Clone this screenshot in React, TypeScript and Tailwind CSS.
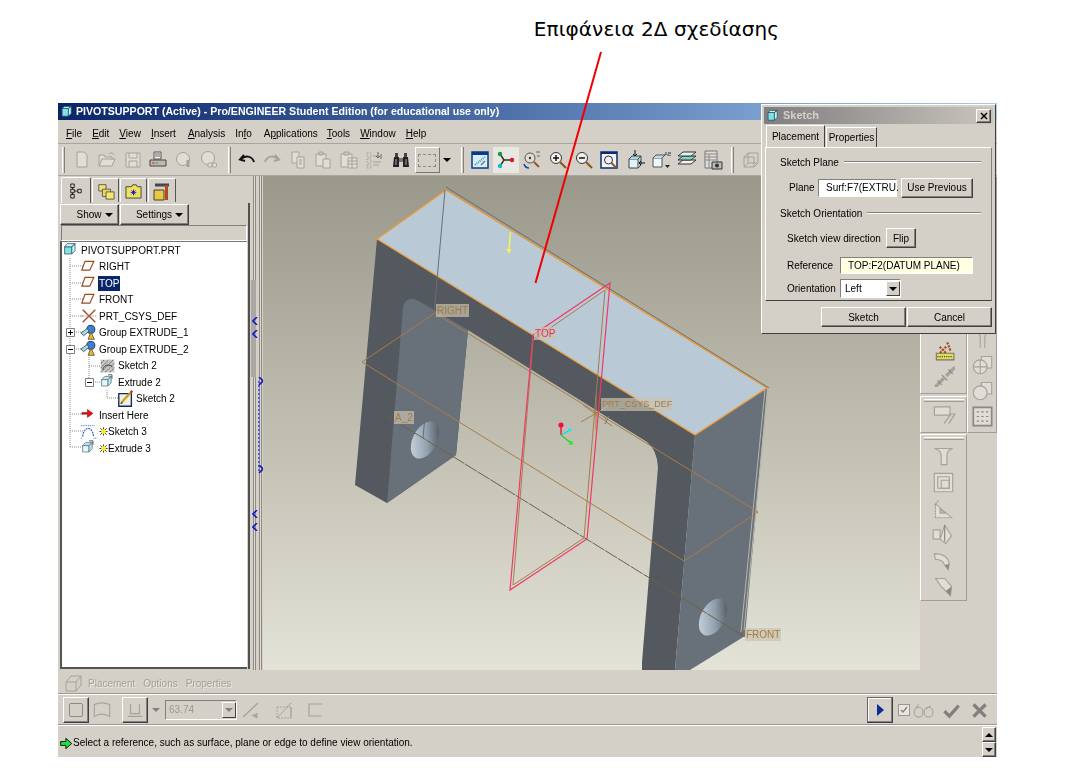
import React from 'react';

const Ico: React.FC<{ children: React.ReactNode; size?: number }> = ({ children, size = 20 }) => (
  <svg width={size} height={size} viewBox="0 0 20 20" className="shrink-0">
    {children}
  </svg>
);

const GREY = '#a5a29a';
const PALE = '#e0ddd6';

// toolbar icons
const NewIco = () => <Ico><path d="M5 2h7l3 3v12H5z" fill={PALE} stroke={GREY} /></Ico>;
const OpenIco = () => <Ico><path d="M2 16V5h5l1 2h7v3M2 16l3-7h13l-3 7z" fill={PALE} stroke={GREY} /><path d="M12 4c2-2 4-1 5 1" fill="none" stroke={GREY} /></Ico>;
const SaveIco = () => <Ico><path d="M3 3h14v14H3z" fill={PALE} stroke={GREY} /><path d="M6 3v5h8V3M6 17v-6h8v6" fill="none" stroke={GREY} /></Ico>;
const PrintIco = () => <Ico><path d="M6 2h7v7H6z" fill="#f2f0ea" stroke="#555" /><path d="M2 10h16v6H2z" fill="#bdb9b0" stroke="#444" /><path d="M4 13h3" stroke="#d33" /><path d="M8 13h2" stroke="#2a2" /><path d="M7 4h5M7 6h5" stroke="#666" /></Ico>;
const DiscIco = () => <Ico><circle cx="9" cy="9" r="6.5" fill={PALE} stroke={GREY} /><path d="M14 10v7" stroke={GREY} strokeWidth="3" /></Ico>;
const DiscLinkIco = () => <Ico><circle cx="9" cy="8" r="6.5" fill={PALE} stroke={GREY} /><circle cx="11" cy="15" r="2.2" fill={PALE} stroke={GREY} /><circle cx="15.5" cy="15" r="2.2" fill={PALE} stroke={GREY} /></Ico>;
const UndoIco = () => <Ico><path d="M7 5L3 9.5l5 1.5M3.5 9.5C8 5 15 5.5 17 12" fill="none" stroke="#111" strokeWidth="2" /></Ico>;
const RedoIco = () => <Ico><path d="M13 5l4 4.5-5 1.5M16.500 9.500C12 5 5 5.500 3 12" fill="none" stroke={GREY} strokeWidth="2" /></Ico>;
const CopyIco = () => <Ico><path d="M4 2h7v11H4z" fill={PALE} stroke={GREY} /><path d="M9 7h7v11H9z" fill={PALE} stroke={GREY} /><path d="M11 10h3M11 12h3M11 14h3" stroke={GREY} /></Ico>;
const PasteIco = () => <Ico><path d="M3 4h10v12H3z" fill={PALE} stroke={GREY} /><path d="M6 2h4v3H6z" fill="#c9c6be" stroke={GREY} /><path d="M10 9h7v9h-7z" fill={PALE} stroke={GREY} /></Ico>;
const PasteTblIco = () => <Ico><path d="M2 4h11v13H2z" fill={PALE} stroke={GREY} /><path d="M5 2h5v3H5z" fill="#c9c6be" stroke={GREY} /><path d="M9 8h9v10H9zM9 11h9M9 14h9M13 8v10" fill={PALE} stroke={GREY} /></Ico>;
const RegenIco = () => <Ico><path d="M3 3h4v4H3zM3 9h4v4H3zM3 15h4v3H3z" fill="none" stroke={GREY} strokeDasharray="1.500 1" /><path d="M9 6h5M9 12h8M9 15h6" stroke={GREY} /><path d="M14 2v6m-2-2l2 2 2-2M17 9V4" fill="none" stroke="#666" /></Ico>;
const BinocularsIco = () => <Ico><path d="M3 7h5v10H2zM12 7h5l1 10h-6z" fill="#222" /><path d="M4 3h3v4H4zM13 3h3v4h-3z" fill="#444" /><path d="M8 8h4v4H8z" fill="#777" /><path d="M5 9v6M15 9v6" stroke="#aaa" /></Ico>;
const ViewIco = () => <Ico><path d="M2 2h16v16H2z" fill="#d6eef9" stroke="#0a3a8a" strokeWidth="1.500" /><path d="M2 2h16v3H2z" fill="#0a3a8a" /><path d="M5 15L15 7" stroke="#49a" strokeDasharray="1 1" strokeWidth="2" /><path d="M11 15l4-4" stroke="#777" strokeWidth="1.500" /></Ico>;
const TriadIco = () => <Ico><path d="M8 10l-4-6M8 10l-4 6M8 10h8" stroke="#333" strokeWidth="1.500" /><circle cx="4" cy="4" r="2.200" fill="#1a9a3a" /><circle cx="4" cy="16" r="2.200" fill="#19b9c9" /><circle cx="16" cy="10" r="2.300" fill="#d0202a" /></Ico>;
const SpinIco = () => <Ico><circle cx="8" cy="8" r="5" fill={PALE} stroke="#555" /><circle cx="8" cy="8" r="1.200" fill="#333" /><path d="M12 12l5 5" stroke="#953" strokeWidth="2" /><path d="M2 14c1 3 3 4 5 4" fill="none" stroke="#14a" strokeWidth="1.500" /><path d="M14 2h4M15 6h3" stroke="#666" /></Ico>;
const ZoomInIco = () => <Ico><circle cx="8" cy="8" r="5.500" fill="#f2f2ee" stroke="#333" /><path d="M5 8h6M8 5v6" stroke="#111" strokeWidth="1.500" /><path d="M12 12l6 6" stroke="#8a5a20" strokeWidth="2.200" /></Ico>;
const ZoomOutIco = () => <Ico><circle cx="8" cy="8" r="5.500" fill="#f2f2ee" stroke="#333" /><path d="M5 8h6" stroke="#111" strokeWidth="1.500" /><path d="M12 12l6 6" stroke="#8a5a20" strokeWidth="2.200" /></Ico>;
const RefitIco = () => <Ico><path d="M2 2h16v16H2z" fill="#f2f2ee" stroke="#0a2a7a" strokeWidth="1.500" /><path d="M2 2h16v2H2z" fill="#0a2a7a" /><circle cx="9.500" cy="10" r="4" fill="#eef" stroke="#333" /><path d="M12.500 13l5 5" stroke="#8a5a20" strokeWidth="2" /></Ico>;
const CubeArrowIco = () => <Ico><path d="M4 9h9v9H4z" fill="#dff3f8" stroke="#444" /><path d="M4 9l3-3h9l-3 3M13 18l3-3V6" fill="#9fdbe8" stroke="#444" /><path d="M10 0v6m-2-2l2 2 2-2" fill="none" stroke="#111" /><path d="M20 13h-6m2-2l-2 2 2 2" fill="none" stroke="#111" /></Ico>;
const CubeAbIco = () => <Ico><path d="M2 8h9v9H2z" fill="#eef8fa" stroke="#555" /><path d="M2 8l3-3h9l-3 3" fill="#bde" stroke="#555" /><text x="13" y="6" fontSize="6" fill="#333" fontFamily="Liberation Sans">AB</text><path d="M14 15h5l-2.500 3z" fill="#222" /></Ico>;
const LayersIco = () => <Ico><path d="M1 14l5-4h13l-5 4z" fill="#f4f4f0" stroke="#333" /><path d="M1 10l5-4h13l-5 4z" fill="#7ed6c8" stroke="#333" /><path d="M1 6l5-4h13l-5 4z" fill="#dff3ee" stroke="#333" /></Ico>;
const SheetCamIco = () => <Ico><path d="M2 1h12v17H2z" fill={PALE} stroke="#777" /><path d="M2 4h12M2 7h12M2 10h12M6 4v14" stroke="#888" /><path d="M9 12h10v7H9z" fill="#bbb" stroke="#333" /><circle cx="14" cy="15.500" r="2" fill="#333" /></Ico>;
const WireCubeIco = () => <Ico><path d="M3 7h10v10H3zM3 7l4-4h10v10l-4 4M7 3v10h10M7 13l-4 4" fill="none" stroke={GREY} /></Ico>;

const ToolBtn: React.FC<{ children: React.ReactNode }> = ({ children }) => (
  <div className="flex h-[26px] w-[25.5px] items-center justify-center">{children}</div>
);
const ToolBtnWide: React.FC<{ children: React.ReactNode }> = ({ children }) => (
  <div className="flex h-[26px] w-[25.8px] items-center justify-center">{children}</div>
);
const Grip = () => <div className="mx-[1px] h-[26px] w-[3px] border-l border-r border-l-white border-r-[#808080] bg-[#d4d0c8]" />;

const Menu = () => {
  const items: [string, string, string, string][] = [
    ['', 'F', 'ile', ''], ['', 'E', 'dit', ''], ['', 'V', 'iew', ''], ['', 'I', 'nsert', ''], ['', 'A', 'nalysis', 'ml-[2px]'],
    ['In', 'f', 'o', ''], ['A', 'p', 'plications', 'ml-[2px]'], ['', 'T', 'ools', 'ml-[-1px]'], ['', 'W', 'indow', ''], ['', 'H', 'elp', ''],
  ];
  return (
    <div className="flex h-[24px] items-center gap-[10px] border-b border-[#a8a59d] pl-[8px] pt-[3px] text-[10px] text-black">
      {items.map(([a, b, c, extra]) => (
        <span key={a + b + c} className={extra}>{a}<u>{b}</u>{c}</span>
      ))}
    </div>
  );
};

const Toolbar = () => (
  <div className="flex h-[32px] items-center border-b border-[#a8a59d] pl-[3px] pt-[1px]">
    <Grip />
    <div className="w-[3px]" />
    <ToolBtn><NewIco /></ToolBtn><ToolBtn><OpenIco /></ToolBtn><ToolBtn><SaveIco /></ToolBtn>
    <ToolBtn><PrintIco /></ToolBtn><ToolBtn><DiscIco /></ToolBtn><ToolBtn><DiscLinkIco /></ToolBtn>
    <div className="w-[5px]" />
    <Grip />
    <div className="w-[2px]" />
    <ToolBtn><UndoIco /></ToolBtn><ToolBtn><RedoIco /></ToolBtn><ToolBtn><CopyIco /></ToolBtn>
    <ToolBtn><PasteIco /></ToolBtn><ToolBtn><PasteTblIco /></ToolBtn><ToolBtn><RegenIco /></ToolBtn>
    <div className="ml-[1px]"><ToolBtn><BinocularsIco /></ToolBtn></div>
    <div className="ml-[1px] flex h-[26px] w-[25px] items-center justify-center border border-b-[#777] border-l-white border-r-[#777] border-t-white">
      <div className="h-[13px] w-[18px] border border-dashed border-[#8d8a82]" />
    </div>
    <div className="ml-[3px] h-0 w-0 border-x-[4px] border-t-[4px] border-x-transparent border-t-black" />
    <div className="w-[9px]" />
    <Grip />
    <div className="w-[3px]" />
    <ToolBtnWide><ViewIco /></ToolBtnWide>
    <div className="flex h-[26px] w-[25.8px] items-center justify-center bg-[#e9e7e1]"><TriadIco /></div>
    <ToolBtnWide><SpinIco /></ToolBtnWide><ToolBtnWide><ZoomInIco /></ToolBtnWide><ToolBtnWide><ZoomOutIco /></ToolBtnWide>
    <ToolBtnWide><RefitIco /></ToolBtnWide><ToolBtnWide><CubeArrowIco /></ToolBtnWide><ToolBtnWide><CubeAbIco /></ToolBtnWide>
    <ToolBtnWide><LayersIco /></ToolBtnWide><ToolBtnWide><SheetCamIco /></ToolBtnWide>
    <div className="w-[5px]" />
    <Grip />
    <div className="w-[3px]" />
    <ToolBtn><WireCubeIco /></ToolBtn>
  </div>
);

// model tree icons
const TreeCube = () => <Ico size={16}><path d="M2 6h9v9H2z" fill="#7fe3e6" stroke="#456" /><path d="M2 6l3-4h10l-4 4zM11 6l4-4v9l-4 4z" fill="#bff" stroke="#456" /></Ico>;
const DatumIco = () => <Ico size={16}><path d="M5 3h11l-5 11H1z" fill="none" stroke="#9a4a20" strokeWidth="1.500" /></Ico>;
const CsysIco = () => <Ico size={18}><path d="M3 3l14 14M17 3L3 17" stroke="#a0502a" strokeWidth="1.500" /><path d="M1 10h18" stroke="#777" strokeDasharray="1 1" /><path d="M10 10l-5-6" stroke="#c66" /></Ico>;
const GroupIco = () => <Ico size={18}><circle cx="12" cy="6" r="4.500" fill="#3d7fd0" stroke="#235" /><path d="M9 17l3-8 4 8z" fill="#e6c21e" stroke="#654" /><path d="M1 10l7-5 2 3-6 5z" fill="#a8dbe0" stroke="#456" /></Ico>;
const HatchIco = () => <Ico size={18}><path d="M2 3h15v14H2z" fill="#c4c4c0" /><path d="M2 7l4-4M2 12l9-9M2 17L16 3M7 17l10-10M12 17l5-5" stroke="#555" strokeDasharray="2 1" /><path d="M4 14c2-6 8-6 11-3" fill="none" stroke="#333" /></Ico>;
const ExtrudeIco = () => <Ico size={16}><path d="M2 7h8v8H2z" fill="#e6f6f8" stroke="#678" /><path d="M2 7l4-4h8l-4 4zM10 7l4-4v8l-4 4z" fill="#b8e8ee" stroke="#678" /><path d="M10 1h5v5" fill="none" stroke="#345" /></Ico>;
const SketchPadIco = () => <Ico size={18}><path d="M2 4h14v14H2z" fill="#f4efdc" stroke="#0a2a6a" strokeWidth="1.500" /><path d="M5 14L15 3" stroke="#c8a020" strokeWidth="2.500" /><path d="M15 3l2-2" stroke="#d02020" strokeWidth="2.500" /><path d="M4 15l2-1" stroke="#222" strokeWidth="1.500" /></Ico>;
const InsertIco = () => <Ico size={16}><path d="M1 7h7V3l7 5-7 5V9H1z" fill="#e81010" stroke="#600" strokeWidth="0.600" /></Ico>;
const BlueSketchIco = () => <Ico size={18}><path d="M3 15c1-12 11-12 12 0" fill="none" stroke="#1a5ad0" strokeWidth="1.300" strokeDasharray="2 1" /><path d="M1 3h16M1 17h2M15 17h3" stroke="#1a5ad0" strokeDasharray="1 1" /></Ico>;
const Star = () => <Ico size={9}><path d="M10 1v18M1 10h18M3 3l14 14M17 3L3 17" stroke="#222" strokeWidth="2" /><circle cx="10" cy="10" r="5.500" fill="#f4ee20" /></Ico>;

type RowProps = { pad: string; icon: React.ReactNode; label: string; selected?: boolean; star?: boolean };

const TreeRow: React.FC<RowProps> = ({ pad, icon, label, selected, star }) => (
  <div className={`flex h-[16.5px] items-center ${pad}`}>
    <div className="flex w-[18px] shrink-0 items-center justify-center">{icon}</div>
    {star && <div className="ml-[2px] mr-[1px] flex w-[6px] items-center justify-center"><Star /></div>}
    <span className={selected ? 'bg-[#0a246a] px-[1px] text-white' : 'px-[1px] text-black'}>{label}</span>
  </div>
);

const Chevron: React.FC<{ right?: boolean; className: string }> = ({ right, className }) => (
  <svg width="6" height="8" viewBox="0 0 6 8" className={`absolute ${className}`}>
    <path d={right ? 'M1 0l4 4-4 4' : 'M5 0L1 4l4 4'} fill="none" stroke="#1414c8" strokeWidth="1.600" />
  </svg>
);

const PanelTab: React.FC<{ children: React.ReactNode; active?: boolean; width: string }> = ({ children, active, width }) => (
  <div className={`flex items-center justify-center rounded-t-[2px] border border-b-0 border-l-white border-r-[#555] border-t-white ${width} ${active ? 'h-[26px]' : 'mt-[1px] h-[24px]'}`}>{children}</div>
);

const Raised: React.FC<{ children: React.ReactNode; className: string }> = ({ children, className }) => (
  <div className={`flex items-center justify-center border border-b-[#404040] border-l-white border-r-[#404040] border-t-white text-black shadow-[inset_-1px_-1px_0_#808080] ${className}`}>{children}</div>
);

const Caret = () => <span className="ml-[3px] inline-block h-0 w-0 border-x-[4px] border-t-[4px] border-x-transparent border-t-black" />;

const LeftPanel = () => (
  <div className="flex w-[192px] shrink-0 flex-col pl-[2px] pt-[1px] text-[10px]">
    <div className="flex gap-[1px] pl-[1px]">
      <PanelTab active width="w-[30px]">
        <svg width="14" height="18" viewBox="0 0 16 20"><path d="M2 2h4v4H2zM2 8h4v4H2zM2 14h4v4H2zM10 8h4v4h-4z" fill="none" stroke="#111" /><path d="M4 6v2M4 12v2M6 10h4" stroke="#111" /></svg>
      </PanelTab>
      <PanelTab width="w-[27px]">
        <svg width="18" height="18" viewBox="0 0 20 20"><path d="M2 3h8v7H2z" fill="#f2e27a" stroke="#554" /><path d="M6 8h9v8H6z" fill="#f0d860" stroke="#554" /><path d="M10 11h9v8h-9z" fill="#f6e470" stroke="#554" /></svg>
      </PanelTab>
      <PanelTab width="w-[27px]">
        <svg width="17" height="17" viewBox="0 0 18 18"><path d="M1 5h6l1-2h4l1 2h4v12H1z" fill="#eee25e" stroke="#443" /><path d="M9 8v6M6 11h6M7 9l4 4M11 9l-4 4" stroke="#1a1ac0" /></svg>
      </PanelTab>
      <PanelTab width="w-[28px]">
        <svg width="20" height="20" viewBox="0 0 20 20"><path d="M2 9h10v10H2z" fill="#e8c840" stroke="#443" /><path d="M3 4h14" stroke="#445" strokeWidth="3" /><path d="M13 4h3v15h-3z" fill="#b44a18" /></svg>
      </PanelTab>
    </div>
    <div className="flex flex-col border-r-[2px] border-r-[#505050] pr-[1px] pt-[1px]">
      <div className="flex">
        <Raised className="h-[21px] w-[59px] pl-[10px]">Show<Caret /></Raised>
        <Raised className="ml-[1px] h-[21px] w-[69px] pl-[10px]">Settings<Caret /></Raised>
      </div>
      <div className="ml-[1px] h-[16px] border border-[#808080] border-b-white border-r-white bg-[#d4d0c8]" />
      <div className="relative h-[428px] border-l-[2px] border-t border-b-[2px] border-[#555] border-t-[#777] bg-white pt-0 text-[10px]">
        {/* dotted tree connectors */}
        <svg className="absolute left-0 top-0" width="186" height="230" fill="none" stroke="#8a8a8a" strokeDasharray="1 1">
          <path d="M8 16V205M8 24h14M8 41h14M8 57h14M8 74h14M8 90h14M8 107h14M8 172h14M8 189h14M8 205h14" />
          <path d="M27 115V140M27 124h16M27 140h12M45 148V156M45 156h14" />
        </svg>
        <svg className="absolute left-[4px] top-[86px]" width="9" height="9" viewBox="0 0 9 9"><path d="M.5.500h8v8h-8z" fill="#fff" stroke="#808080" /><path d="M2 4.500h5M4.500 2v5" stroke="#000" /></svg>
        <svg className="absolute left-[4px] top-[103px]" width="9" height="9" viewBox="0 0 9 9"><path d="M.5.500h8v8h-8z" fill="#fff" stroke="#808080" /><path d="M2 4.500h5" stroke="#000" /></svg>
        <svg className="absolute left-[23px] top-[136px]" width="9" height="9" viewBox="0 0 9 9"><path d="M.5.500h8v8h-8z" fill="#fff" stroke="#808080" /><path d="M2 4.500h5" stroke="#000" /></svg>
        <div className="relative">
          <TreeRow pad="pl-0" icon={<TreeCube />} label="PIVOTSUPPORT.PRT" />
          <TreeRow pad="pl-[18px]" icon={<DatumIco />} label="RIGHT" />
          <TreeRow pad="pl-[18px]" icon={<DatumIco />} label="TOP" selected />
          <TreeRow pad="pl-[18px]" icon={<DatumIco />} label="FRONT" />
          <TreeRow pad="pl-[18px]" icon={<CsysIco />} label="PRT_CSYS_DEF" />
          <TreeRow pad="pl-[18px]" icon={<GroupIco />} label="Group EXTRUDE_1" />
          <TreeRow pad="pl-[18px]" icon={<GroupIco />} label="Group EXTRUDE_2" />
          <TreeRow pad="pl-[37px]" icon={<HatchIco />} label="Sketch 2" />
          <TreeRow pad="pl-[37px]" icon={<ExtrudeIco />} label="Extrude 2" />
          <TreeRow pad="pl-[55px]" icon={<SketchPadIco />} label="Sketch 2" />
          <TreeRow pad="pl-[18px]" icon={<InsertIco />} label="Insert Here" />
          <TreeRow pad="pl-[18px]" icon={<BlueSketchIco />} label="Sketch 3" star />
          <TreeRow pad="pl-[18px]" icon={<ExtrudeIco />} label="Extrude 3" star />
        </div>
      </div>
    </div>
  </div>
);

const Splitter = () => (
  <div className="relative flex w-[13px] shrink-0 justify-center gap-[3px] pl-[1px]">
    <div className="w-[3px] border-x border-x-[#8d8a82] bg-[#dedbd3]" />
    <div className="w-[3px] border-x border-x-[#8d8a82] bg-[#dedbd3]" />
    <div className="absolute left-[1px] top-[104px] h-[97px] w-[5px] bg-[#aaa8a0]" />
    <div className="absolute left-[8px] top-[205px] h-[90px] w-[2px] border-l-2 border-dotted border-[#5a5ad0]" />
    <Chevron className="left-[2px] top-[141px]" />
    <Chevron className="left-[2px] top-[154px]" />
    <Chevron right className="left-[8px] top-[201px]" />
    <Chevron right className="left-[8px] top-[289px]" />
    <Chevron className="left-[2px] top-[334px]" />
    <Chevron className="left-[2px] top-[347px]" />
  </div>
);

const ModelLabel: React.FC<{ text: string; className: string; red?: boolean }> = ({ text, className, red }) => (
  <span className={`absolute bg-[#c9c3b0]/70 px-[1px] leading-[13px] ${red ? 'text-[#e8305f]' : 'text-[#a87a40]'} ${className}`}>{text}</span>
);

const Viewport = () => (
  <div className="relative w-[657px] shrink-0 overflow-hidden bg-gradient-to-b from-[#9a988a] to-[#e4e3d7]">
    <svg className="absolute left-0 top-0" width="657" height="494" viewBox="263 176 657 494" fill="none">
      <defs>
        <linearGradient id="hole" x1="1" y1="0" x2="0" y2="1">
          <stop offset="0" stopColor="#3d4249" />
          <stop offset="0.45" stopColor="#8fa0ae" />
          <stop offset="1" stopColor="#d4e0ea" />
        </linearGradient>
      </defs>
      {/* body */}
      <path d="M377 239L695 435L675 670H642V662L658 467Q657 450 647 442L468 330L456 455L387 503L355 485Z" fill="#54585f" />
      <path d="M387 503L403 308Q405 296 417 300L468 330L456 455Z" fill="#687179" />
      <path d="M695 435L767 388L745 636L690 670H675Z" fill="#687179" />
      <path d="M446 190L767 388L695 435L377 239Z" fill="#b9c9d6" />
      <path d="M377 239L695 435L767 388L446 190Z" stroke="#f0982a" strokeWidth="1.200" />
      <path d="M446 187L769 388" stroke="#6c6e70" />
      <ellipse cx="425" cy="440" rx="12" ry="20" transform="rotate(28 425 440)" fill="url(#hole)" />
      <ellipse cx="713" cy="617" rx="12" ry="20" transform="rotate(28 713 617)" fill="url(#hole)" />
      {/* back edges and axis */}
      <path d="M445 190L423 438" stroke="#6c6e70" />
      <path d="M388 417L423 438L745 637" stroke="#6f5f4a" strokeDasharray="14 1" />
      <path d="M768 388L744 630M765 390L741 632" stroke="#b8b5ac" />
      {/* TOP datum */}
      <path d="M362 362L435 313L758 512L684 561Z" stroke="#a87c48" />
      {/* FRONT datum */}
      <path d="M533 340L605 290L584 538L513 585Z" stroke="#a87c48" />
      <path d="M533 335L610 283L587 539L510 590Z" stroke="#f0386a" strokeWidth="1.200" />
      {/* csys */}
      <path d="M581 422L612 404M583 405L612 426M596 395V430" stroke="#a87c48" />
      {/* triad */}
      <path d="M561 425V435" stroke="#e81040" strokeWidth="1.400" />
      <path d="M561 435L570 430" stroke="#10d8e0" strokeWidth="1.200" />
      <path d="M561 435L571 443" stroke="#20d030" strokeWidth="1.200" />
      <circle cx="561" cy="425" r="2.600" fill="#f01040" />
      <circle cx="570" cy="430" r="1.700" fill="#10f0f0" />
      <circle cx="571" cy="443" r="2" fill="#20f030" />
      {/* direction arrow */}
      <path d="M510.500 232L509 250" stroke="#f4f060" strokeWidth="1.600" />
      <path d="M506 249L509 254L511.500 249Z" fill="#f4f060" />
    </svg>
    <ModelLabel text="RIGHT" className="left-[173px] top-[128px] text-[10px]" />
    <ModelLabel text="TOP" red className="left-[271px] top-[151px] text-[10px]" />
    <ModelLabel text="PRT_CSYS_DEF" className="left-[338px] top-[222px] text-[9px]" />
    <ModelLabel text="A_2" className="left-[131px] top-[235px] text-[10px]" />
    <ModelLabel text="FRONT" className="left-[482px] top-[452px] text-[10px]" />
    <span className="absolute left-[341px] top-[236px] text-[10px] leading-[13px] text-[#857a66]">y</span>
  </div>
);

const Rail: React.FC<{ children: React.ReactNode; className: string }> = ({ children, className }) => (
  <div className={`flex flex-col items-center border border-b-[#a09d95] border-l-white border-r-[#a09d95] border-t-white ${className}`}>{children}</div>
);

const RailGrip = () => <div className="mb-[2px] mt-[2px] h-[3px] w-[40px] border-y border-b-[#a09d95] border-t-white" />;

const RightRails = () => (
  <div className="flex w-[77px] shrink-0 flex-col">
    <div className="flex">
      <div className="flex w-[47px] flex-col">
        <Rail className="h-[218px] justify-end gap-[1px] pb-[6px]">
          <div className="mb-[3px]"><Ico size={22}><path d="M3 13h16v6H3z" fill="#e0dc58" stroke="#776" /><path d="M4 16h14" stroke="#444" strokeDasharray="1 1" /><path d="M6 7l6 6M12 7l-6 6M13 3l3 8" stroke="#a8501c" strokeWidth="2" strokeDasharray="2 1" /></Ico></div>
          <Ico size={22}><path d="M2 20L10 12M12 10L20 2" stroke={GREY} strokeWidth="3" fill="none" /><path d="M8 9l5 5M4 14l4 4M14 4l4 4" stroke="#888" /></Ico>
        </Rail>
        <Rail className="mt-[2px] h-[37px]">
          <RailGrip />
          <div className="-mt-[2px]"><Ico size={24}><path d="M2 4h13v7H2z" fill={PALE} stroke={GREY} /><path d="M10 18l5-7v-1h4l-5 8" fill="none" stroke={GREY} /></Ico></div>
        </Rail>
        <Rail className="mt-[1px] h-[167px] gap-[3px]">
          <RailGrip />
          <Ico size={23}><path d="M2 3h16c-4 1-5 3-5 6v8H8V9c0-3-2-5-6-6z" fill={PALE} stroke={GREY} /></Ico>
          <Ico size={23}><path d="M2 2h16v16H2z" fill={PALE} stroke={GREY} /><path d="M5 5h10v10H5z" fill="none" stroke={GREY} /><path d="M8 8h7v7H8z" fill="none" stroke={GREY} /></Ico>
          <Ico size={23}><path d="M3 18V6l14 12zM3 18h14M6 3l-4 4" fill={PALE} stroke={GREY} strokeDasharray="2 .5" /><path d="M7 14V10l5 4z" fill="#bbb" stroke={GREY} /></Ico>
          <Ico size={23}><path d="M1 6h6v8H1zM7 14l5 4 5-7-6-9-4 12" fill={PALE} stroke={GREY} /><path d="M11 2v14" stroke="#888" /></Ico>
          <Ico size={23}><path d="M2 4c7 0 12 3 13 9l-1 5-3-4c-1-3-4-5-8-5z" fill={PALE} stroke={GREY} /><path d="M15 13l-1 5-3-4z" fill="#888" /></Ico>
          <Ico size={23}><path d="M3 3h8l6 7-1 8-8-8z" fill={PALE} stroke={GREY} /><path d="M17 10l-1 8-4-4z" fill="#888" /></Ico>
        </Rail>
      </div>
      <div className="flex w-[30px] flex-col">
        <Rail className="h-[257px] justify-end gap-[3px] pb-[4px]">
          <Ico size={23}><path d="M3 2c4 2 5 4 5 8v8M17 2c-4 2-5 4-5 8v8" fill="none" stroke={GREY} /></Ico>
          <Ico size={23}><path d="M9 3h9v10H9z" fill={PALE} stroke={GREY} /><circle cx="8" cy="12" r="6" fill={PALE} stroke={GREY} /><path d="M2 12h12M8 6v12" stroke={GREY} /></Ico>
          <Ico size={23}><path d="M9 3h9v10H9z" fill={PALE} stroke={GREY} /><circle cx="8" cy="12" r="6" fill={PALE} stroke={GREY} /></Ico>
          <Ico size={23}><path d="M2 2h16v16H2z" fill={PALE} stroke="#888" strokeWidth="1.500" /><path d="M5 6h2M9 6h2M13 6h2M5 10h2M9 10h2M13 10h2M5 14h2M9 14h2M13 14h2" stroke="#888" /></Ico>
        </Rail>
      </div>
    </div>
  </div>
);

const BottomBar = () => (
  <div className="flex h-[87px] shrink-0 flex-col">
    {/* disabled tab titles */}
    <div className="flex h-[24px] items-center border-b border-b-[#9a978f] pl-[6px] pt-[3px] text-[10px] text-[#a3a09a] [text-shadow:1px_1px_0_#eeeae2]">
      <Ico size={20}><path d="M2 9h10v9H2z" fill="none" stroke={GREY} /><path d="M2 9l5-6h10l-5 6M12 18l5-6V3" fill="none" stroke={GREY} /></Ico>
      <span className="ml-[4px]">Placement</span>
      <span className="ml-[8px]">Options</span>
      <span className="ml-[8px]">Properties</span>
    </div>
    <div className="flex h-[31px] items-center border-b border-b-[#9a978f] border-t border-t-white pl-[5px] pr-[7px]">
      <Raised className="h-[26px] w-[26px]"><div className="h-[14px] w-[14px] rounded-[2px] border-[1.500px] border-[#8d8a82]" /></Raised>
      <div className="ml-[2px] w-[26px]"><Ico size={22}><path d="M3 16V5c4-2 10-2 14 0v11c-4-3-10-3-14 0z" fill="none" stroke={GREY} /></Ico></div>
      <Raised className="ml-[5px] h-[26px] w-[26px]"><Ico size={18}><path d="M5 3v11h10V3M2 17h16" fill="none" stroke={GREY} strokeWidth="1.300" /></Ico></Raised>
      <div className="ml-[4px] h-0 w-0 border-x-[4px] border-t-[4px] border-x-transparent border-t-[#808080]" />
      <div className="ml-[5px] flex h-[20px] w-[72px] items-center justify-between border border-b-white border-l-[#808080] border-r-white border-t-[#808080] pl-[3px] text-[10px] text-[#9a978f]">
        <span>63.74</span>
        <div className="flex h-[16px] w-[14px] items-center justify-center border border-b-[#404040] border-l-white border-r-[#404040] border-t-white">
          <div className="h-0 w-0 border-x-[4px] border-t-[4px] border-x-transparent border-t-[#808080]" />
        </div>
      </div>
      <div className="ml-[4px] w-[30px]"><Ico size={20}><path d="M2 17L17 3" stroke={GREY} strokeWidth="1.300" /><path d="M11 15l5 3v-5" fill="#aaa" stroke={GREY} /></Ico></div>
      <div className="ml-[3px] w-[30px]"><Ico size={20}><path d="M3 7h14v11H3z" fill="none" stroke={GREY} strokeDasharray="2 1" /><path d="M3 18L17 3M17 7v11" fill="none" stroke={GREY} /></Ico></div>
      <div className="ml-[1px]"><Ico size={20}><path d="M17 4H4v12h13" fill="none" stroke={GREY} strokeWidth="1.200" /></Ico></div>
      <div className="flex-1" />
      <div className="flex h-[26px] w-[26px] items-center justify-center border border-[#404040] border-l-[#666] border-t-[#666] bg-[#d4d0c8] shadow-[inset_-1px_-1px_0_#808080,inset_1px_1px_0_#fff]">
        <div className="h-0 w-0 border-y-[6px] border-l-[7px] border-y-transparent border-l-[#0a2a9a]" />
      </div>
      <div className="ml-[5px] flex h-[12px] w-[12px] items-center justify-center border border-[#9a978f] bg-[#e8e6e0]">
        <svg width="8" height="8" viewBox="0 0 8 8"><path d="M1 4l2 2 4-5" fill="none" stroke="#808080" strokeWidth="1.300" /></svg>
      </div>
      <div className="ml-[2px]"><Ico size={22}><ellipse cx="6" cy="12" rx="4" ry="4.500" fill="none" stroke={GREY} /><ellipse cx="15" cy="12" rx="4" ry="4.500" fill="none" stroke={GREY} /><path d="M3 9l3-4M13 9l4-3" stroke={GREY} /></Ico></div>
      <div className="ml-[6px]"><Ico size={22}><path d="M4 11l4.500 4.500L17 6" fill="none" stroke="#808080" strokeWidth="3" /></Ico></div>
      <div className="ml-[6px]"><Ico size={22}><path d="M5 5l11 11M16 5L5 16" fill="none" stroke="#808080" strokeWidth="3" /></Ico></div>
    </div>
    <div className="flex flex-1 items-end border-t border-t-white pb-[7px] pl-[2px] text-[10px] text-black">
      <Ico size={13}><path d="M1 7h8V2l9 8-9 8v-5H1z" fill="#20e040" stroke="#111" strokeWidth="1.500" /></Ico>
      <span>Select a reference, such as surface, plane or edge to define view orientation.</span>
      <div className="flex-1" />
      <div className="mb-[-7px] mr-[1px] flex w-[14px] flex-col">
        <Raised className="h-[15px] w-[14px]"><div className="h-0 w-0 border-x-[4px] border-b-[4px] border-x-transparent border-b-black" /></Raised>
        <Raised className="h-[15px] w-[14px]"><div className="h-0 w-0 border-x-[4px] border-t-[4px] border-x-transparent border-t-black" /></Raised>
      </div>
    </div>
  </div>
);

const Sunken: React.FC<{ children?: React.ReactNode; className: string }> = ({ children, className }) => (
  <div className={`flex items-center border border-b-white border-l-[#808080] border-r-white border-t-[#808080] ${className}`}>{children}</div>
);

const SketchDialog = () => (
  <div className="absolute left-[761px] top-[104px] flex h-[230px] w-[235px] flex-col border border-b-[#404040] border-l-white border-r-[#404040] border-t-white bg-[#d4d0c8] px-[2px] pt-[2px] text-[10px] text-black blur-[0.3px]">
    <div className="flex h-[17px] items-center bg-gradient-to-r from-[#7f7f7f] to-[#c8c5bd] pl-[2px] pr-[2px]">
      <Ico size={14}><path d="M3 5h9v11H3z" fill="#7fe3e6" stroke="#345" /><path d="M3 5l3-3h10l-4 3zM12 5l4-3v10l-4 4z" fill="#aff" stroke="#345" /></Ico>
      <span className="ml-[3px] text-[11px] font-bold text-[#d4d0c8]">Sketch</span>
      <div className="flex-1" />
      <Raised className="h-[14px] w-[15px] bg-[#d4d0c8]">
        <svg width="8" height="8" viewBox="0 0 8 8"><path d="M1 1l6 6M7 1L1 7" stroke="#000" strokeWidth="1.500" /></svg>
      </Raised>
    </div>
    <div className="flex items-end pl-[2px] pt-[1px]">
      <div className="flex h-[22px] w-[59px] items-center justify-center border border-b-0 border-l-white border-r-[#404040] border-t-white">Placement</div>
      <div className="ml-[1px] flex h-[20px] w-[51px] items-center justify-center border border-b-0 border-l-white border-r-[#404040] border-t-white">Properties</div>
    </div>
    <div className="mx-[1px] flex h-[154px] flex-col border border-b-[#404040] border-l-white border-r-[#808080] border-t-white pt-[6px]">
      <div className="flex h-[16px] items-center pl-[14px] pr-[10px]">
        <span>Sketch Plane</span>
        <div className="ml-[5px] h-[2px] flex-1 border-y border-b-white border-t-[#808080]" />
      </div>
      <div className="mt-[8px] flex h-[19px] items-center pl-[23px]">
        <span className="w-[29px]">Plane</span>
        <Sunken className="h-[18px] w-[79px] bg-white pl-[7px]">Surf:F7(EXTRU.</Sunken>
        <Raised className="ml-[4px] h-[20px] w-[72px]">Use Previous</Raised>
      </div>
      <div className="mt-[8px] flex h-[16px] items-center pl-[14px] pr-[10px]">
        <span>Sketch Orientation</span>
        <div className="ml-[5px] h-[2px] flex-1 border-y border-b-white border-t-[#808080]" />
      </div>
      <div className="mt-[7px] flex h-[20px] items-center pl-[21px]">
        <span className="w-[99px]">Sketch view direction</span>
        <Raised className="h-[20px] w-[30px]">Flip</Raised>
      </div>
      <div className="mt-[8px] flex h-[18px] items-center pl-[21px]">
        <span className="w-[53px]">Reference</span>
        <Sunken className="h-[17px] w-[133px] bg-[#ffffe1] pl-[7px]">TOP:F2(DATUM PLANE)</Sunken>
      </div>
      <div className="mt-[5px] flex h-[19px] items-center pl-[21px]">
        <span className="w-[53px]">Orientation</span>
        <Sunken className="h-[19px] w-[61px] justify-between bg-white pl-[4px]">
          <span>Left</span>
          <div className="flex h-[15px] w-[14px] items-center justify-center border border-b-[#404040] border-l-white border-r-[#404040] border-t-white bg-[#d4d0c8]">
            <div className="h-0 w-0 border-x-[4px] border-t-[4px] border-x-transparent border-t-black" />
          </div>
        </Sunken>
      </div>
    </div>
    <div className="mt-[6px] flex justify-end gap-[1px] pr-[1px]">
      <Raised className="h-[20px] w-[85px]">Sketch</Raised>
      <Raised className="h-[20px] w-[85px]">Cancel</Raised>
    </div>
  </div>
);

export default function App() {
  return (
    <div className="relative h-[780px] w-[1068px] overflow-hidden bg-white font-['Liberation_Sans',sans-serif]">
      <div className="flex h-[103px] justify-center pl-[245px] pt-[16px] font-['DejaVu_Sans',sans-serif] text-[20px] leading-[26px] tracking-[0.1px] text-black">
        Επιφάνεια 2Δ σχεδίασης
      </div>
      <div className="ml-[58px] flex h-[654px] w-[939px] flex-col bg-[#d4d0c8] blur-[0.3px]">
        <div className="flex h-[17px] shrink-0 items-center bg-gradient-to-r from-[#0a246a] to-[#a6caf0] pl-[2px] text-[10.6px] font-bold text-white">
          <Ico size={14}><path d="M3 5h9v11H3z" fill="#7fe3e6" stroke="#345" /><path d="M3 5l3-3h10l-4 3zM12 5l4-3v10l-4 4z" fill="#aff" stroke="#345" /></Ico>
          <span className="ml-[2px]">PIVOTSUPPORT (Active) - Pro/ENGINEER Student Edition (for educational use only)</span>
        </div>
        <Menu />
        <Toolbar />
        <div className="flex min-h-0 flex-1">
          <LeftPanel />
          <Splitter />
          <Viewport />
          <RightRails />
        </div>
        <BottomBar />
      </div>
      <SketchDialog />
      {/* annotation leader from the caption to the surface */}
      <svg className="pointer-events-none absolute left-0 top-0" width="1068" height="780">
        <path d="M601 52L535.500 283" stroke="#f00000" strokeWidth="2" />
      </svg>
    </div>
  );
}
